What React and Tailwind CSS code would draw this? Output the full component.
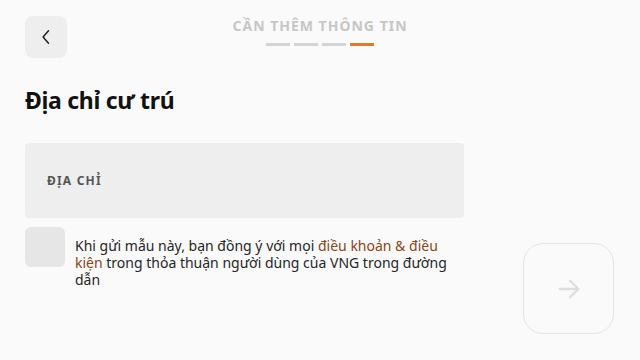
import React from "react";

export default function App() {
  return (
    <div
      className="relative w-[640px] h-[360px] bg-[#fafafa] overflow-hidden"
      style={{ fontFamily: '"Noto Sans", "Open Sans", sans-serif' }}
    >
      <div className="px-[25px] pt-[16px]">
        <div className="grid grid-cols-[1fr_auto_1fr] items-start">
          <button className="w-[42px] h-[42px] rounded-lg bg-[#eeeeee] flex items-center justify-center">
            <svg width="20" height="20" viewBox="0 0 24 24" fill="none" stroke="#222" strokeWidth="1.8" strokeLinecap="round" strokeLinejoin="round">
              <path d="M15 4.5 L8.5 12 L15 19.5" />
            </svg>
          </button>
          <div className="flex flex-col items-center pt-[1px]">
            <div className="text-[14px] leading-[18px] font-bold tracking-[1px] text-[#c6c6c6]">
              CẦN THÊM THÔNG TIN
            </div>
            <div className="flex gap-[4px] mt-[8px]">
              <div className="w-[24px] h-[3px] bg-[#d4d4d4]" />
              <div className="w-[24px] h-[3px] bg-[#d4d4d4]" />
              <div className="w-[24px] h-[3px] bg-[#d4d4d4]" />
              <div className="w-[24px] h-[3px] bg-[#e8772e]" />
            </div>
          </div>
          <div />
        </div>

        <h1 className="mt-[26px] text-[23px] leading-[32px] font-bold text-[#111] tracking-[-0.3px]">
          Địa chỉ cư trú
        </h1>

        <div className="mt-[27px] w-[439px] h-[75px] rounded bg-[#eeeeee] flex items-center px-[22px]">
          <span className="text-[12px] font-bold tracking-[1.2px] text-[#555]">ĐỊA CHỈ</span>
        </div>

        <div className="mt-[9px] flex gap-[10px] w-[439px]">
          <div className="w-[40px] h-[40px] shrink-0 rounded-md bg-[#e6e6e6]" />
          <p className="mt-[10px] text-[14px] leading-[17px] text-[#262626]">
            Khi gửi mẫu này, bạn đồng ý với mọi{" "}
            <span className="text-[#8b4513]">điều khoản &amp; điều kiện</span> trong thỏa thuận người dùng của VNG trong đường dẫn
          </p>
        </div>
      </div>

      <button className="absolute right-[26px] bottom-[26px] w-[91px] h-[91px] rounded-[20px] border border-[#e4e4e4] bg-[#fafafa] flex items-center justify-center">
        <svg width="28" height="28" viewBox="0 0 24 24" fill="none" stroke="#dedede" strokeWidth="2" strokeLinecap="round" strokeLinejoin="round">
          <path d="M4 12 H20" />
          <path d="M13 5 L20 12 L13 19" />
        </svg>
      </button>
    </div>
  );
}
